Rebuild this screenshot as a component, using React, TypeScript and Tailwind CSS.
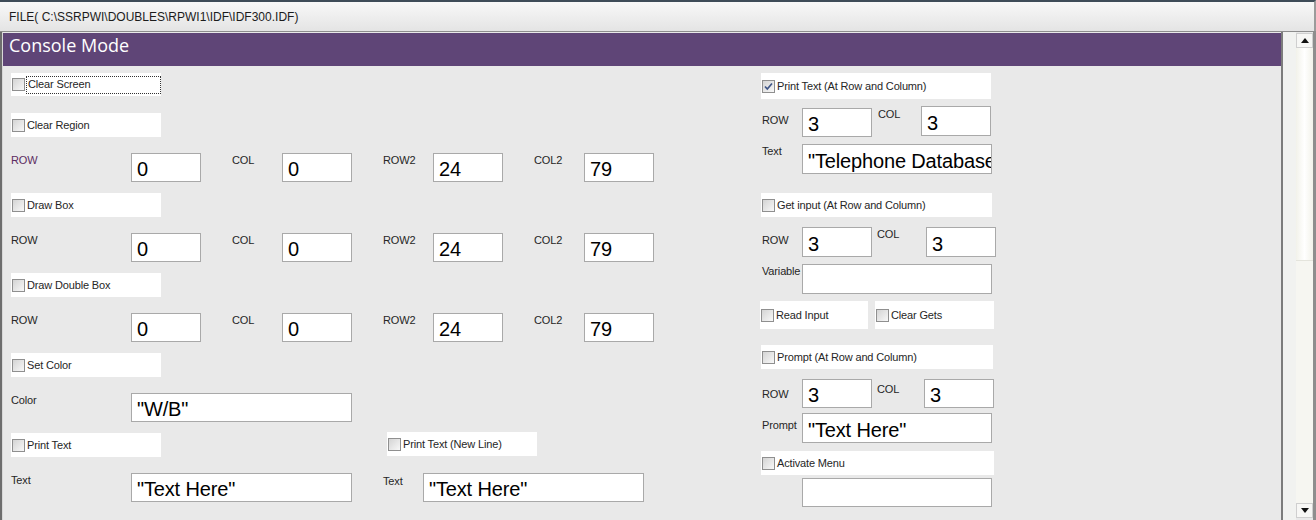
const Check = ({ checked = false }: { checked?: boolean }) => (
  <span className="relative block h-[13px] w-[13px] shrink-0 border border-[#8f8f8f] bg-linear-to-br from-[#d4d4d4] to-[#f8f8f8]">
    {checked && (
      <svg className="absolute left-0 top-0" width="11" height="11" viewBox="0 0 11 11">
        <path d="M2 5.5 L4.3 8 L9 2.5" fill="none" stroke="#3f5587" strokeWidth="1.7" />
      </svg>
    )}
  </span>
);

type BoxProps = {
  label: string;
  className: string;
  checked?: boolean;
  focus?: boolean;
};

const CheckBox = ({ label, className, checked, focus }: BoxProps) => (
  <div className={`flex items-center bg-white pl-[1px] ${className}`}>
    <Check checked={checked} />
    {focus ? (
      <span className="ml-[1px] flex h-[18px] flex-1 items-center border border-dotted border-[#333] pl-[1px] leading-[13px]">
        {label}
      </span>
    ) : (
      <span className="ml-[2px] whitespace-nowrap leading-[13px]">{label}</span>
    )}
  </div>
);

const Input = ({ value = "", className }: { value?: string; className: string }) => (
  <input
    readOnly
    defaultValue={value}
    className={`shrink-0 border border-[#a9a9a9] bg-white pl-[5px] pt-[4px] font-['Liberation_Sans',Arial,sans-serif] text-[20px] leading-[22px] text-black outline-none ${className}`}
  />
);

const Label = ({ text, className }: { text: string; className: string }) => (
  <span className={`shrink-0 whitespace-nowrap leading-[13px] ${className}`}>{text}</span>
);

const CoordRow = ({ first = false }: { first?: boolean }) => (
  <div className="flex h-[40px] items-start gap-[31px]">
    <div className="flex">
      <Label text="ROW" className={`mt-[1px] w-[120px] ${first ? "text-[#5c2c62]" : ""}`} />
      <Input value="0" className="h-[29px] w-[70px]" />
    </div>
    <div className="flex">
      <Label text="COL" className="mt-[1px] w-[50px]" />
      <Input value="0" className="h-[29px] w-[70px]" />
    </div>
    <div className="flex">
      <Label text="ROW2" className="mt-[1px] w-[50px]" />
      <Input value="24" className="h-[29px] w-[70px]" />
    </div>
    <div className="flex">
      <Label text="COL2" className="mt-[1px] w-[50px]" />
      <Input value="79" className="h-[29px] w-[70px]" />
    </div>
  </div>
);

const Arrow = ({ up }: { up?: boolean }) => (
  <div className="flex h-[15px] items-center justify-center border border-[#cfcfcf] bg-[#f7f7f5]">
    <svg width="8" height="5" viewBox="0 0 8 5">
      <path d={up ? "M0 5 L4 0 L8 5 Z" : "M0 0 L8 0 L4 5 Z"} fill="#111" />
    </svg>
  </div>
);

const App = () => {
  return (
    <div className="h-[520px] w-[1316px] overflow-hidden bg-[#e9e9e9] font-['Liberation_Sans',Arial,sans-serif] text-[11px] tracking-[-0.15px] text-[#262626]">
      {/* title bar */}
      <div className="flex h-[31px] items-center border-t-2 border-r-2 border-t-[#3e4c58] border-r-[#9b9b9b] bg-linear-to-b from-[#f8f8f8] to-[#e4e4e4] pl-[9px] text-[12px] tracking-normal text-[#1c1c1c]">
        FILE( C:\SSRPWI\DOUBLES\RPWI1\IDF\IDF300.IDF)
      </div>

      <div className="flex h-[489px] border-t border-[#8d8d8d]">
        <div className="w-[2px] bg-[#6e6e6e]" />
        <div className="w-[1px] bg-[#d8d8d8]" />

        <main className="flex w-[1278px] flex-col">
          <div className="mt-[1px] flex h-[33px] items-start bg-[#5f4577] pl-[6px] font-['Open_Sans',sans-serif] text-[18px] leading-[24px] tracking-normal text-white">
            Console Mode
          </div>

          <div className="flex pt-[7px]">
            {/* left column */}
            <div className="flex w-[757px] flex-col pl-[8px]">
              <div className="h-[40px]">
                <CheckBox label="Clear Screen" focus className="h-[23px] w-[150px]" />
              </div>
              <div className="h-[40px]">
                <CheckBox label="Clear Region" className="h-[24px] w-[150px]" />
              </div>
              <CoordRow first />
              <div className="h-[40px]">
                <CheckBox label="Draw Box" className="h-[24px] w-[150px]" />
              </div>
              <CoordRow />
              <div className="h-[40px]">
                <CheckBox label="Draw Double Box" className="h-[24px] w-[150px]" />
              </div>
              <CoordRow />
              <div className="h-[40px]">
                <CheckBox label="Set Color" className="h-[24px] w-[150px]" />
              </div>
              <div className="flex h-[40px] items-start">
                <Label text="Color" className="mt-[1px] w-[120px]" />
                <Input value={'"W/B"'} className="h-[29px] w-[221px]" />
              </div>
              <div className="flex h-[40px] items-start">
                <CheckBox label="Print Text" className="h-[24px] w-[150px]" />
                <CheckBox label="Print Text (New Line)" className="-mt-[1px] ml-[226px] h-[24px] w-[150px]" />
              </div>
              <div className="flex h-[40px] items-start">
                <Label text="Text" className="mt-[1px] w-[120px]" />
                <Input value={'"Text Here"'} className="h-[29px] w-[221px]" />
                <Label text="Text" className="ml-[31px] mt-[2px] w-[40px]" />
                <Input value={'"Text Here"'} className="h-[29px] w-[221px]" />
              </div>
            </div>

            {/* right column */}
            <div className="flex w-[240px] flex-col">
              <CheckBox label="Print Text (At Row and Column)" checked className="ml-[1px] h-[26px] w-[230px]" />

              <div className="mt-[7px] flex h-[31px] items-start pl-[2px]">
                <Label text="ROW" className="mt-[8px] w-[40px]" />
                <Input value="3" className="mt-[2px] h-[29px] w-[70px]" />
                <Label text="COL" className="ml-[6px] mt-[2px] w-[43px]" />
                <Input value="3" className="h-[30px] w-[70px]" />
              </div>

              <div className="mt-[7px] flex items-start pl-[2px]">
                <Label text="Text" className="mt-[1px] w-[40px]" />
                <Input value={'"Telephone Database"'} className="h-[30px] w-[190px]" />
              </div>

              <CheckBox label="Get input (At Row and Column)" className="ml-[1px] mt-[19px] h-[24px] w-[231px]" />

              <div className="mt-[10px] flex items-start pl-[2px]">
                <Label text="ROW" className="mt-[7px] w-[40px]" />
                <Input value="3" className="h-[30px] w-[70px]" />
                <Label text="COL" className="ml-[5px] mt-[1px] w-[49px]" />
                <Input value="3" className="h-[30px] w-[70px]" />
              </div>

              <div className="mt-[7px] flex items-start pl-[2px]">
                <Label text="Variable" className="mt-[1px] w-[40px]" />
                <Input className="h-[30px] w-[190px]" />
              </div>

              <div className="mt-[7px] flex gap-[7px]">
                <CheckBox label="Read Input" className="h-[28px] w-[108px]" />
                <CheckBox label="Clear Gets" className="h-[28px] w-[119px]" />
              </div>

              <CheckBox label="Prompt (At Row and Column)" className="ml-[1px] mt-[16px] h-[24px] w-[232px]" />

              <div className="mt-[10px] flex items-start pl-[2px]">
                <Label text="ROW" className="mt-[9px] w-[40px]" />
                <Input value="3" className="h-[29px] w-[70px]" />
                <Label text="COL" className="ml-[5px] mt-[4px] w-[47px]" />
                <Input value="3" className="h-[29px] w-[70px]" />
              </div>

              <div className="mt-[5px] flex items-start pl-[2px]">
                <Label text="Prompt" className="mt-[6px] w-[40px]" />
                <Input value={'"Text Here"'} className="h-[30px] w-[190px]" />
              </div>

              <CheckBox label="Activate Menu" className="ml-[1px] mt-[8px] h-[24px] w-[233px]" />

              <Input className="ml-[42px] mt-[3px] h-[29px] w-[190px]" />
            </div>
          </div>
        </main>

        {/* scrollbar */}
        <div className="flex w-[35px]">
          <div className="w-[2px] bg-[#7c7c7c]" />
          <div className="w-[13px] bg-[#f1f2f0]" />
          <div className="flex w-[17px] flex-col pb-[2px] pt-[1px]">
            <Arrow up />
            <div className="flex flex-1 flex-col bg-[#f6f6f1]">
              <div className="h-[213px] border-b border-[#e4e4dc] bg-linear-to-r from-[#f2f2ea] via-white to-[#f2f2ea]" />
            </div>
            <Arrow />
          </div>
          <div className="w-[3px] bg-[#8e8e8e]" />
        </div>
      </div>
    </div>
  );
};

export default App;
